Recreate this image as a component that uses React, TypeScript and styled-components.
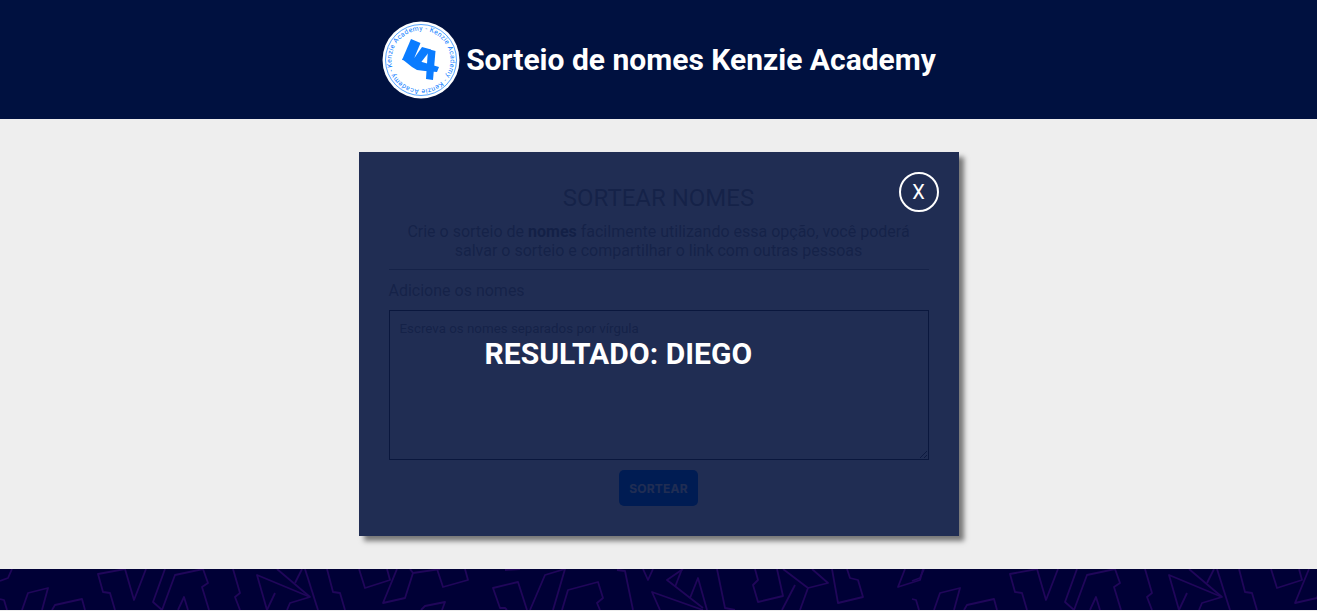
import styled, { createGlobalStyle } from "styled-components";

const GlobalStyle = createGlobalStyle`
    * {
        box-sizing: border-box;
    }

    body {
        margin: 0;
        background-color: #eeeeee;
        font-family: Roboto, "Liberation Sans", sans-serif;
    }
`;

const Header = styled.header`
    height: 119px;
    padding-left: 0.5px;
    background-color: #001140;
    display: flex;
    align-items: center;
    justify-content: center;
    gap: 6.5px;
`;

const LogoSvg = styled.svg`
    width: 78px;
    height: 78px;
    margin-top: 1px;
`;

const HeaderTitle = styled.h1`
    margin: 0;
    color: #fff;
    font-size: 30px;
    font-weight: 700;
`;

const Main = styled.main`
    height: 450px;
    padding-top: 33px;
    display: flex;
    justify-content: center;
    align-items: flex-start;
`;

const Modal = styled.section`
    position: relative;
    width: 600px;
    height: 384px;
    padding: 30px;
    background-color: #fff;
    box-shadow: 5px 5px 5px #777;
    display: flex;
    flex-direction: column;
    align-items: center;
`;

const Title = styled.h2`
    margin: 1px 0 9px;
    color: #aaa;
    font-size: 24px;
    font-weight: 400;
    line-height: 30px;
`;

const Description = styled.p`
    margin: 0;
    padding-bottom: 9px;
    width: 100%;
    color: #aaa;
    font-size: 16px;
    line-height: 19px;
    text-align: center;
    border-bottom: 1px solid #a8a8a8;

    strong {
        color: #999;
        font-weight: 700;
    }
`;

const Label = styled.label`
    align-self: flex-start;
    margin: 11px 0 10px;
    color: #aaa;
    font-size: 16px;
    line-height: 19px;
`;

const NamesInput = styled.textarea`
    width: 100%;
    height: 150px;
    flex: none;
    padding: 10px;
    border: 1px solid #555;
    border-radius: 0;
    background: #fff;
    font-family: Roboto, "Liberation Sans", sans-serif;
    font-size: 13.33px;
    outline: none;

    &::placeholder {
        color: #a6a6a6;
    }
`;

const DrawButton = styled.button`
    width: 79px;
    height: 36px;
    margin-top: 10px;
    flex: none;
    border: none;
    border-radius: 5px;
    background-color: #0078ff;
    color: #fff;
    font-family: Inter, Roboto, sans-serif;
    font-size: 12px;
    font-weight: 700;
    letter-spacing: 0.2px;
`;

const Overlay = styled.div`
    position: absolute;
    inset: 0;
    padding: 183px 0 0 126px;
    background-color: rgba(0, 15, 58, 0.875);
`;

const Result = styled.h2`
    margin: 0;
    color: #fff;
    font-size: 30px;
    font-weight: 700;
    line-height: 38px;
    letter-spacing: 0.06px;
`;

const CloseButton = styled.button`
    position: absolute;
    top: 20px;
    right: 20px;
    width: 40px;
    height: 40px;
    padding: 0;
    border: 2px solid #fff;
    border-radius: 50%;
    background: transparent;
    color: #fff;
    font-family: Roboto, sans-serif;
    font-size: 20px;
`;

const Footer = styled.footer`
    height: 41px;
    background-color: #000036;
    overflow: hidden;
`;

const PatternSvg = styled.svg`
    display: block;
    width: 1317px;
    height: 41px;
`;

const PATTERN_LINES = [
    "M0 12 8 9 12 0",
    "M22 41 28 24 48 19 42 41",
    "M0 30 4 31 7 41",
    "M52 41 55 36 82 30 85 41",
    "M125 0 98 5 103 23 110 24 115 41",
    "M125 0 134 31 146 0",
    "M165 0 153 33 162 41 175 6 203 0 208 14 202 18 209 41",
    "M178 41 184 28 188 41",
    "M233 0 240 24 235 28 240 41",
    "M267 41 257 6 310 28 290 34 287 41",
    "M275 24 267 41",
    "M277 0 310 28",
    "M302 0 295 14",
    "M305 0 318 41",
    "M327 0 333 23 340 24 345 41",
    "M359 0 365 19 390 11 387 0",
    "M397 0 383 34 405 29 413 4 440 0",
    "M413 4 410 0",
    "M421 41 425 37 445 33 442 41",
    "M437 0 443 18 468 11 465 0",
    "M505 1 520 0",
    "M527 41 518 13 493 19 500 39 505 39 507 41",
    "M530 41 545 6 565 0 553 41",
    "M562 41 568 21 598 13 603 29 597 34 600 41",
    "M617 1 625 2 633 41",
    "M643 0 648 11 653 0",
    "M660 41 652 23 703 41",
    "M683 0 667 11 703 39",
    "M675 18 682 0",
    "M690 29 698 9 707 41",
    "M717 0 725 39 735 41",
    "M755 0 758 11 753 16 758 33 783 27 777 0",
    "M783 0 808 19 828 14 812 0",
    "M808 19 800 41",
    "M795 16 782 41",
    "M832 0 838 34 863 28 858 11 850 9 847 0",
    "M905 0 898 18 920 11 923 0",
];

function Logo() {
    return (
        <LogoSvg viewBox="0 0 78 78">
            <defs>
                <path id="logo-ring" d="M39 39m-29.5 0a29.5 29.5 0 1 1 59 0a29.5 29.5 0 1 1 -59 0" />
            </defs>
            <circle cx="39" cy="39" r="38.5" fill="#fff" />
            <circle cx="39" cy="39" r="35.5" fill="none" stroke="#0a7cff" strokeWidth="0.7" />
            <g transform="rotate(-14 39 39)">
                <text fontSize="6.8" fill="#0a7cff" fontFamily="Roboto, sans-serif">
                    <textPath href="#logo-ring" textLength="183" lengthAdjust="spacing">
                        Kenzie Academy - Kenzie Academy - Kenzie Academy -
                    </textPath>
                </text>
            </g>
            <g fill="#0a7cff">
                <polygon points="29,18 38.5,22 31,40 20,39" />
                <polygon points="20,38 30,35 40,41 57,46 55,51 43,50 35,49 30,46" />
                <polygon points="40,26 49,28.5 38.5,42 32,37.5" />
                <polygon points="46,28 53.5,30 51,59 44,58" />
            </g>
        </LogoSvg>
    );
}

function FooterPattern() {
    return (
        <PatternSvg viewBox="0 0 1317 41">
            <defs>
                <g id="footer-tile" fill="none" stroke="#20065a" strokeWidth="1.8" strokeLinejoin="round">
                    {PATTERN_LINES.map((line) => (
                        <path key={line} d={line} />
                    ))}
                </g>
            </defs>
            <use href="#footer-tile" />
            <use href="#footer-tile" x="912" />
        </PatternSvg>
    );
}

export default function App() {
    return (
        <>
            <GlobalStyle />
            <Header>
                <Logo />
                <HeaderTitle>Sorteio de nomes Kenzie Academy</HeaderTitle>
            </Header>
            <Main>
                <Modal>
                    <Title>SORTEAR NOMES</Title>
                    <Description>
                        Crie o sorteio de <strong>nomes</strong> facilmente utilizando essa opção, você poderá
                        <br />
                        salvar o sorteio e compartilhar o link com outras pessoas
                    </Description>
                    <Label htmlFor="names">Adicione os nomes</Label>
                    <NamesInput id="names" placeholder="Escreva os nomes separados por vírgula" />
                    <DrawButton>SORTEAR</DrawButton>
                    <Overlay>
                        <Result>RESULTADO: DIEGO</Result>
                        <CloseButton>X</CloseButton>
                    </Overlay>
                </Modal>
            </Main>
            <Footer>
                <FooterPattern />
            </Footer>
        </>
    );
}
